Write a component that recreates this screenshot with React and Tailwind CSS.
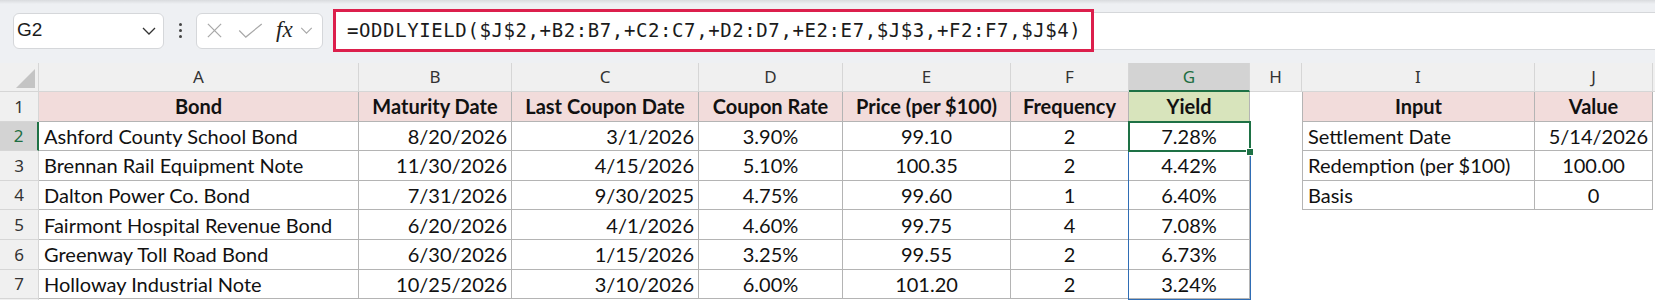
import React from 'react';

const COLS = [
  { k: 'A', w: 320 },
  { k: 'B', w: 153 },
  { k: 'C', w: 187 },
  { k: 'D', w: 144 },
  { k: 'E', w: 168 },
  { k: 'F', w: 118 },
  { k: 'G', w: 121 },
  { k: 'H', w: 52 },
  { k: 'I', w: 233 },
  { k: 'J', w: 118 },
];

const bonds = [
  ['Ashford County School Bond', '8/20/2026', '3/1/2026', '3.90%', '99.10', '2', '7.28%'],
  ['Brennan Rail Equipment Note', '11/30/2026', '4/15/2026', '5.10%', '100.35', '2', '4.42%'],
  ['Dalton Power Co. Bond', '7/31/2026', '9/30/2025', '4.75%', '99.60', '1', '6.40%'],
  ['Fairmont Hospital Revenue Bond', '6/20/2026', '4/1/2026', '4.60%', '99.75', '4', '7.08%'],
  ['Greenway Toll Road Bond', '6/30/2026', '1/15/2026', '3.25%', '99.55', '2', '6.73%'],
  ['Holloway Industrial Note', '10/25/2026', '3/10/2026', '6.00%', '101.20', '2', '3.24%'],
];

const inputs = [
  ['Settlement Date', '5/14/2026', 'right'],
  ['Redemption (per $100)', '100.00', 'center'],
  ['Basis', '0', 'center'],
];

// alignment per column for the bond table
const ALIGN = ['left', 'right', 'right', 'center', 'center', 'center', 'center'];

const alignCls = (a) =>
  a === 'left' ? 'justify-start pl-[5px]' : a === 'right' ? 'justify-end pr-[4px]' : 'justify-center';

const Cell = ({ w, children, align = 'left', bold, bg = 'bg-white', border = true, left }) => (
  <div
    style={{ width: w }}
    className={`h-full shrink-0 flex items-center whitespace-nowrap overflow-hidden ${alignCls(align)} ${bg} ${
      border ? 'border-r border-b border-[#b4b4b4]' : ''
    } ${left ? 'border-l border-[#b4b4b4]' : ''} ${bold ? 'font-bold' : ''}`}
  >
    {children}
  </div>
);

const RowHeader = ({ n, active }) => (
  <div
    className={`w-[39px] h-full shrink-0 flex items-center justify-center border-b border-[#d6d6d6] ${
      active
        ? 'bg-[#d3d3d3] text-[#1e6e42] border-r-2 border-r-[#1e7145]'
        : 'bg-[#f0f0f0] text-[#333] border-r border-r-[#d6d6d6]'
    }`}
    style={{ fontFamily: '"Noto Sans", sans-serif', fontSize: 17 }}
  >
    {n}
  </div>
);

const Chevron = ({ className }) => (
  <svg viewBox="0 0 14 8" className={className} fill="none" stroke="currentColor" strokeWidth="1.3">
    <path d="M1 1l6 6 6-6" />
  </svg>
);

function Toolbar() {
  return (
    <div className="h-[63px] pb-[2px] bg-[#eef0f3] relative flex items-center">
      <div className="absolute top-0 left-0 right-0 h-[4px] bg-gradient-to-b from-[#d9dbde] to-[#eef0f3]" />
      <div className="ml-[13px] w-[151px] h-[36px] bg-white border border-[#d5d7da] rounded-[6px] flex items-center pl-[3px] pr-[7px]">
        <span className="text-[19px] text-[#1b1b1b]" style={{ fontFamily: '"Liberation Sans", Arial, sans-serif' }}>
          G2
        </span>
        <Chevron className="ml-auto w-[14px] h-[8px] text-[#333]" />
      </div>
      <div className="ml-[14px] w-[4px] flex flex-col items-center gap-[3px]">
        <span className="w-[3px] h-[3px] rounded-full bg-[#444]" />
        <span className="w-[3px] h-[3px] rounded-full bg-[#444]" />
        <span className="w-[3px] h-[3px] rounded-full bg-[#444]" />
      </div>
      <div className="ml-[14px] w-[127px] h-[36px] bg-white border border-[#d5d7da] rounded-[6px] flex items-center">
        <svg viewBox="0 0 18 18" className="ml-[9px] w-[17px] h-[17px]" fill="none" stroke="#a8a8a8" strokeWidth="1.3">
          <path d="M2 2l14 14M16 2L2 16" />
        </svg>
        <svg viewBox="0 0 26 16" className="ml-[15px] w-[25px] h-[15px]" fill="none" stroke="#a8a8a8" strokeWidth="1.3">
          <path d="M1 8l7 7L25 1" />
        </svg>
        <span
          className="ml-[13px] text-[23px] italic text-[#222] leading-none -mt-[3px]"
          style={{ fontFamily: '"Liberation Serif", "Times New Roman", serif' }}
        >
          fx
        </span>
        <Chevron className="ml-[7px] w-[13px] h-[7px] text-[#a8a8a8]" />
      </div>
      <div className="ml-[10px] flex-1 h-[38px] bg-white border-y border-[#d5d7da] flex items-center">
        <div className="h-[43px] w-[761px] border-[3px] border-[#dc1f4c] flex items-center pl-[11px] bg-white">
          <span
            className="text-[19px] text-[#1b1b1b] tracking-[0.6px]"
            style={{ fontFamily: '"DejaVu Sans Mono", monospace' }}
          >
            =ODDLYIELD($J$2,+B2:B7,+C2:C7,+D2:D7,+E2:E7,$J$3,+F2:F7,$J$4)
          </span>
        </div>
      </div>
    </div>
  );
}

function Grid() {
  const cellFont = { fontFamily: 'Lato, "Open Sans", sans-serif', fontSize: 20, color: '#111' };
  const rows = [];
  // header row 1
  rows.push(
    <div key="r1" className="h-[29.6px] flex" style={cellFont}>
      <RowHeader n={1} />
      {['Bond', 'Maturity Date', 'Last Coupon Date', 'Coupon Rate', 'Price (per $100)', 'Frequency'].map((t, i) => (
        <Cell key={t} w={COLS[i].w} align="center" bold bg="bg-[#f2dcdb]">
          {t}
        </Cell>
      ))}
      <Cell w={COLS[6].w} align="center" bold bg="bg-[#d8e4bc]">
        Yield
      </Cell>
      <Cell w={COLS[7].w} border={false} />
      <Cell w={COLS[8].w} align="center" bold bg="bg-[#f2dcdb]" left>
        Input
      </Cell>
      <Cell w={COLS[9].w} align="center" bold bg="bg-[#f2dcdb]">
        Value
      </Cell>
    </div>
  );
  bonds.forEach((b, ri) => {
    const inp = inputs[ri];
    rows.push(
      <div key={ri} className="h-[29.6px] flex" style={cellFont}>
        <RowHeader n={ri + 2} active={ri === 0} />
        {b.map((v, ci) => (
          <Cell key={ci} w={COLS[ci].w} align={ALIGN[ci]}>
            {v}
          </Cell>
        ))}
        <Cell w={COLS[7].w} border={false} />
        {inp ? (
          <>
            <Cell w={COLS[8].w} left>
              {inp[0]}
            </Cell>
            <Cell w={COLS[9].w} align={inp[2]}>
              {inp[1]}
            </Cell>
          </>
        ) : (
          <>
            <Cell w={COLS[8].w + 1} border={false} />
            <Cell w={COLS[9].w} border={false} />
          </>
        )}
      </div>
    );
  });
  // row 8 is only just visible at the bottom edge
  rows.push(
    <div key="r8" className="h-[29.6px] flex">
      <RowHeader n="" />
    </div>
  );

  return (
    <div className="relative bg-white">
      <div className="h-[29px] flex" style={{ fontFamily: '"Noto Sans", sans-serif', fontSize: 17 }}>
        <div className="w-[39px] shrink-0 h-full bg-[#f0f0f0] border-r border-b border-[#d6d6d6] relative">
          <svg viewBox="0 0 20 20" className="absolute right-[3px] bottom-[3px] w-[19px] h-[19px]">
            <path d="M20 0L20 20L0 20Z" fill="#c4c4c4" />
          </svg>
        </div>
        {COLS.map((c) => (
          <div
            key={c.k}
            style={{ width: c.w }}
            className={`shrink-0 h-full flex items-center justify-center border-r border-[#d6d6d6] ${
              c.k === 'G'
                ? 'bg-[#d3d3d3] text-[#1e6e42] border-b-2 border-b-[#1e7145]'
                : 'bg-[#f0f0f0] text-[#333] border-b border-b-[#d6d6d6]'
            }`}
          >
            {c.k}
          </div>
        ))}
        <div className="flex-1 h-full bg-[#f0f0f0] border-b border-[#d6d6d6]" />
      </div>
      {rows}
      {/* spill range outline G2:G7 */}
      <div className="absolute left-[1128px] top-[58px] w-[123px] h-[179px] border-[1.5px] border-[#2f6db5] pointer-events-none" />
      {/* active cell G2 */}
      <div className="absolute left-[1128px] top-[57.6px] w-[123px] h-[31.6px] border-2 border-[#1e7145] pointer-events-none" />
      <div className="absolute left-[1246px] top-[85px] w-[8px] h-[8px] bg-[#1e7145] border border-white pointer-events-none" />
    </div>
  );
}

export default function App() {
  return (
    <div className="w-[1655px] h-[300px] overflow-hidden bg-white">
      <Toolbar />
      <Grid />
    </div>
  );
}
